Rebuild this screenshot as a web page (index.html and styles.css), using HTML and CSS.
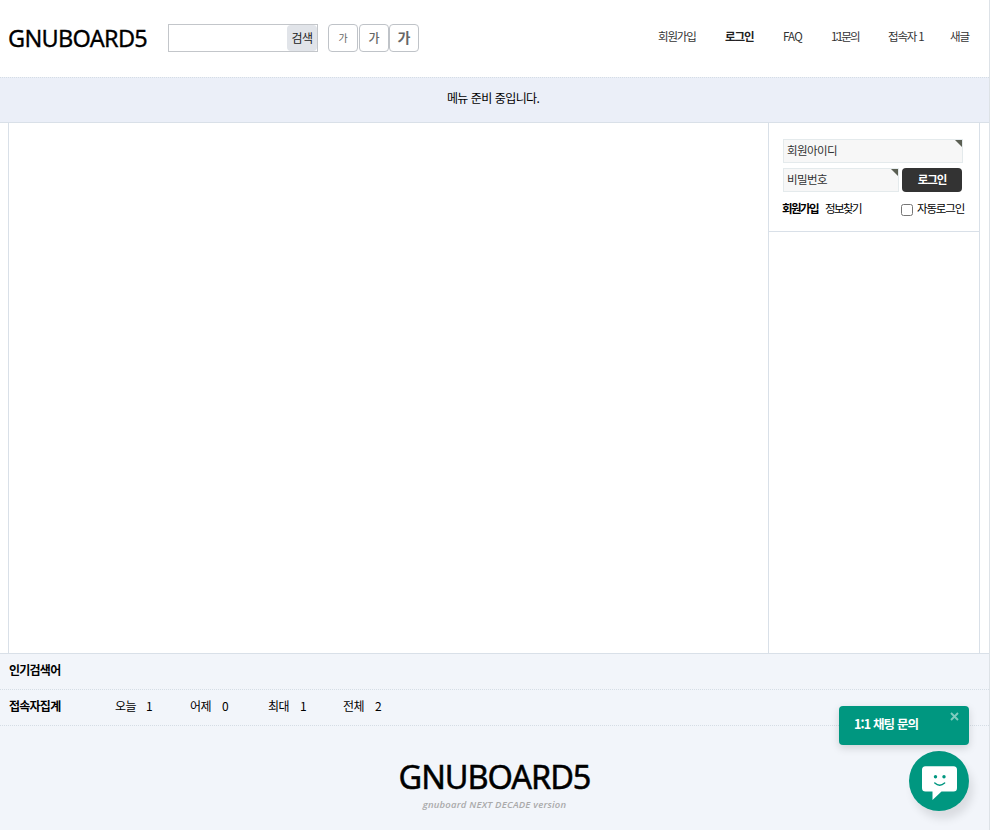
FILE: index.html
```html
<!DOCTYPE html>
<html lang="ko">
<head>
<meta charset="utf-8">
<title>GNUBOARD5</title>
<link rel="stylesheet" href="styles.css">
</head>
<body>
<div class="page">
  <header class="header">
    <a class="logo">GNUBOARD5</a>
    <form class="search"><input class="search-input" type="text" aria-label="검색어"><button class="search-btn" type="button">검색</button></form>
    <div class="sizes"><button class="size size-s" type="button">가</button><button class="size size-m" type="button">가</button><button class="size size-l" type="button">가</button></div>
    <nav class="links">
      <a>회원가입</a><a class="strong">로그인</a><a class="faq">FAQ</a><a class="inquiry">1:1문의</a><a>접속자 1</a><a>새글</a>
    </nav>
  </header>
  <div class="menu">메뉴 준비 중입니다.</div>
  <div class="wrapper">
    <main class="content"></main>
    <aside class="aside">
      <form class="login">
        <div class="field field-id">회원아이디</div>
        <div class="login-row">
          <div class="field field-pw">비밀번호</div>
          <button class="login-btn" type="button">로그인</button>
        </div>
        <div class="login-help">
          <a class="join">회원가입</a><a class="find">정보찾기</a>
          <input class="auto" type="checkbox" id="auto"><label for="auto">자동로그인</label>
        </div>
      </form>
    </aside>
  </div>
  <section class="stat"><h2>인기검색어</h2></section>
  <section class="stat visits">
    <h2>접속자집계</h2>
    <span>오늘</span><span>1</span><span>어제</span><span>0</span><span>최대</span><span>1</span><span>전체</span><span>2</span>
  </section>
  <footer class="footer">
    <div class="footer-logo">GNUBOARD5</div>
    <div class="tagline">gnuboard NEXT DECADE version</div>
  </footer>
</div>
<div class="chat">
  <div class="chat-label">1:1 채팅 문의
    <svg class="chat-close" width="9" height="9" viewBox="0 0 9 9"><path d="M1 1 8 8M8 1 1 8" stroke="#80ccbf" stroke-width="1.9"/></svg>
  </div>
  <div class="chat-button">
    <svg width="60" height="60" viewBox="0 0 60 60">
      <path fill="#fff" d="M16.500 15.300H44.500Q48 15.300 48 18.800V37Q48 40.500 44.500 40.500H32.500L23.500 49V40.500H16.500Q13 40.500 13 37V18.800Q13 15.300 16.500 15.300Z"/>
      <circle cx="26.500" cy="25.700" r="1.700" fill="#009780"/><circle cx="35" cy="25.700" r="1.700" fill="#009780"/>
      <path d="M25.800 32Q30.700 36.400 35.600 32" fill="none" stroke="#009780" stroke-width="1.500" stroke-linecap="round"/>
    </svg>
  </div>
</div>
</body>
</html>
```
FILE: styles.css
```css
* { box-sizing: border-box; }
body {
  margin: 0;
  background: #fff;
  color: #000;
  font: 12px/18px "Noto Sans CJK KR", sans-serif;
  overflow: hidden;
}
.page {
  display: flex;
  flex-direction: column;
  width: 990px;
  height: 830px;
  border-right: 1px solid #dde2e7;
}
button, input { font-family: inherit; margin: 0; padding: 0; }

.header {
  display: flex;
  align-items: flex-start;
  height: 77px;
  padding-left: 8px;
}
.logo {
  width: 160px;
  padding-top: 22px;
  font: 23.5px/32px "Noto Sans", sans-serif;
  letter-spacing: -.72px;
  -webkit-text-stroke: .3px #000;
}
.search {
  display: flex;
  flex: none;
  width: 150px;
  height: 28px;
  margin: 24px 10px 0 0;
  border: 1px solid #c3c6ca;
}
.search-input { width: 118px; border: 0; }
.search-btn {
  width: 30px;
  padding-bottom: 2px;
  border: 0;
  border-radius: 4px;
  background: #e1e4e9;
  color: #222;
  font-size: 12px;
  letter-spacing: -.5px;
}
.logo, .sizes, .links { flex: none; }
.sizes { display: flex; width: 91px; margin-top: 24px; }
.size {
  width: 30px;
  height: 28px;
  padding-bottom: 2px;
  border: 1px solid #bfc3c8;
  border-radius: 4px;
  background: #fff;
  color: #666;
}
.size-s { margin-right: 1px; font-size: 10px; }
.size-m { font-size: 12px; font-weight: 500; }
.size-l { font-size: 14px; font-weight: 700; }
.links {
  display: grid;
  grid-template-columns: 67px 58px 48px 57px 62px 39px;
  margin: 27px 0 0 239px;
  color: #333;
  font-size: 11.5px;
  letter-spacing: -1.2px;
  white-space: nowrap;
}
.links .faq { letter-spacing: -.8px; }
.links .inquiry { letter-spacing: -1.9px; }
.strong { font-weight: 700; color: #222; letter-spacing: -1.1px; }

.menu {
  height: 46px;
  padding: 11px 3px 0 0;
  border-top: 1px dotted #d5dde5;
  border-bottom: 1px solid #d9e0e8;
  background: #ebeff8;
  text-align: center;
  letter-spacing: -.65px;
  word-spacing: .5px;
}

.wrapper {
  display: grid;
  grid-template-columns: 760px 212px;
  height: 530px;
  padding-left: 8px;
}
.content { border-left: 1px solid #d9e0e8; }
.aside { border: solid #d9e0e8; border-width: 0 1px; }
.login {
  height: 109px;
  padding: 16px 0 0 14px;
  border-bottom: 1px solid #d9e0e8;
}
.field {
  position: relative;
  height: 24px;
  padding: 1px 3px;
  border: 1px solid #e4eaec;
  background: #f7f7f7;
  color: #333;
  font-size: 11.5px;
  letter-spacing: -.6px;
}
.field::after {
  content: "";
  position: absolute;
  top: 0;
  right: 0;
  border: solid #5b5f53;
  border-width: 7px 0 0 7px;
  border-left-color: transparent;
}
.field-id { width: 180px; }
.login-row { display: flex; gap: 3px; margin-top: 5px; }
.field-pw { width: 116px; }
.login-btn {
  width: 60px;
  height: 24px;
  padding-bottom: 2px;
  border: 0;
  border-radius: 4px;
  background: #333;
  color: #fff;
  font-size: 11.5px;
  font-weight: 700;
  letter-spacing: -1.1px;
}
.login-help {
  display: flex;
  margin: 7px 0 0 -1px;
  font-size: 11.5px;
  letter-spacing: -1.6px;
  white-space: nowrap;
}
.join { width: 43px; font-weight: 700; }
.find { width: 76px; }
.auto { width: 12px; height: 12px; margin: 5px 4px 0 0; }
.login-help label { letter-spacing: -1.15px; }

.stat {
  display: flex;
  height: 36px;
  padding: 7px 8px 0;
  border-top: 1px solid #d9e0e8;
  background: #f2f5fa;
}
.stat h2 {
  margin: 0 0 0 1px;
  font-size: 12px;
  line-height: 18px;
  letter-spacing: -.75px;
}
.visits {
  display: grid;
  grid-template-columns: 107px 31px 44px 32px 46px 32px 43px 32px 40px;
  border-top: 1px dotted #d5dde5;
  letter-spacing: -.5px;
}

.footer {
  flex: 1;
  border-top: 1px dotted #d5dde5;
  background: #f2f5fa;
  text-align: center;
}
.footer-logo {
  padding-top: 29px;
  font: 32.5px/43px "Noto Sans", sans-serif;
  letter-spacing: -1.05px;
  -webkit-text-stroke: .5px #000;
}
.tagline {
  color: #aaa;
  font: italic 600 9.5px/14px "Open Sans", sans-serif;
  letter-spacing: .22px;
}

.chat {
  position: absolute;
  top: 706px;
  right: 22px;
  display: flex;
  flex-direction: column;
  align-items: flex-end;
  gap: 6px;
}
.chat-label {
  position: relative;
  width: 130px;
  height: 39px;
  padding: 9px 15px;
  border-radius: 4px;
  background: #009780;
  box-shadow: 0 3px 8px rgba(0, 0, 0, .15);
  color: #fff;
  font-size: 12.5px;
  font-weight: 700;
  letter-spacing: -.85px;
}
.chat-close { position: absolute; top: 6px; right: 10px; }
.chat-button {
  width: 60px;
  height: 60px;
  border-radius: 50%;
  background: #009780;
  box-shadow: 4px 8px 8px rgba(0, 0, 0, .1);
}
```
